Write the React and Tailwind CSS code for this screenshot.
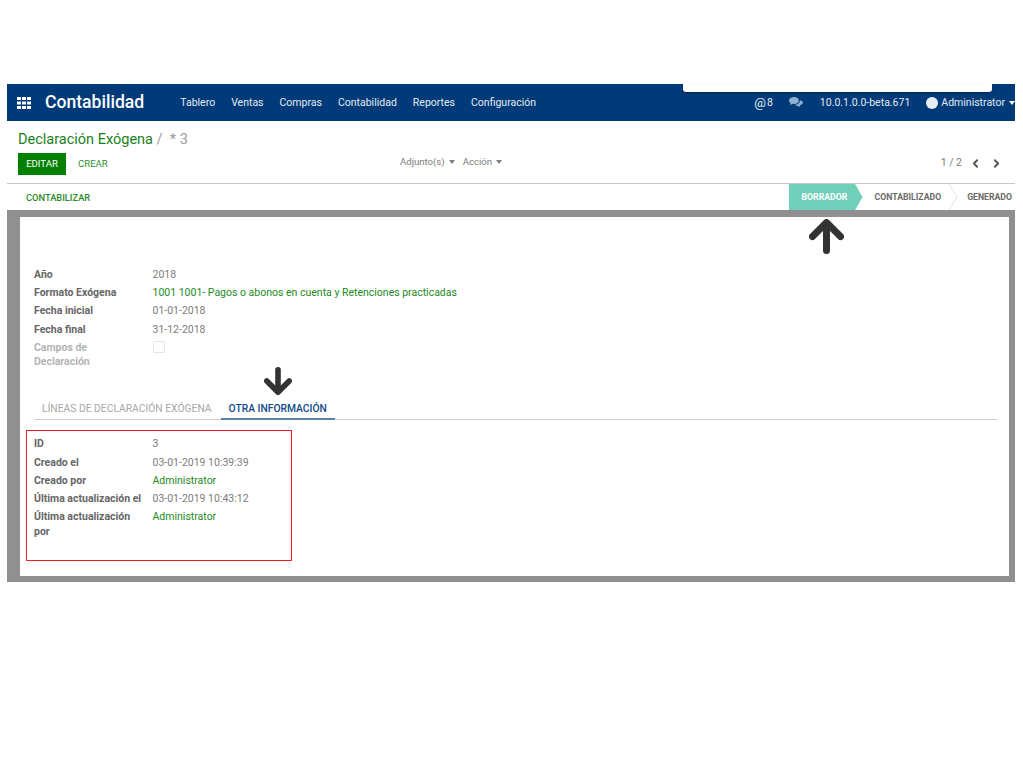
import { ChevronLeft, ChevronRight } from "lucide-react";

const Caret = () => (
  <span className="ml-1 inline-block w-0 h-0 align-middle border-x-[3.5px] border-x-transparent border-t-[4px] border-t-current" />
);

const Arrow = ({ down, size }) => (
  <svg
    width={size}
    height={size}
    viewBox="0 0 30 30"
    className={down ? "rotate-180" : ""}
    fill="none"
    stroke="#333333"
    strokeWidth="6"
    strokeLinecap="round"
    strokeLinejoin="round"
  >
    <path d="M15 27V4M3 15L15 3L27 15" />
  </svg>
);

const Field = ({ label, value, green, muted }) => (
  <div className="flex">
    <div className={`w-[118.5px] shrink-0 pr-[7px] font-bold leading-[14.5px] pb-[3.7px] ${muted ? "text-[#b4b4b4]" : "text-[#666666]"}`}>
      {label}
    </div>
    <div className={green ? "text-[#1d8a1d]" : "text-[#7c7c7c]"}>{value}</div>
  </div>
);

export default function App() {
  const menu = ["Tablero", "Ventas", "Compras", "Contabilidad", "Reportes", "Configuración"];

  return (
    <div className="h-[767px] pt-[84px] pl-[7px] pr-2 bg-white font-['Roboto',sans-serif] text-[10.5px]">
      {/* navbar */}
      <div className="relative h-[37px] bg-[#003a78] text-[#e4eaf1] flex items-center">
        <svg width="14" height="12" viewBox="0 0 14 12" fill="#ffffff" className="ml-[10px]">
          <path d="M0 0h4v3H0zM5 0h4v3H5zM10 0h4v3h-4zM0 4.5h4v3H0zM5 4.5h4v3H5zM10 4.5h4v3h-4zM0 9h4v3H0zM5 9h4v3H5zM10 9h4v3h-4z" />
        </svg>
        <span className="ml-[14px] text-[17.6px] font-medium text-white">Contabilidad</span>
        <div className="ml-9 flex gap-4">
          {menu.map((m) => (
            <span key={m}>{m}</span>
          ))}
        </div>
        <div className="ml-auto flex items-center">
          <span className="text-[13px] leading-none">@</span>
          <span className="ml-px">8</span>
          <svg width="14" height="11" viewBox="0 0 14 11" fill="#8fb0d0" className="ml-4">
            <path d="M5 0C2.2 0 0 1.5 0 3.5c0 1 .6 2 1.6 2.6L1 8l2.4-1.2c.5.1 1 .2 1.6.2 2.8 0 5-1.6 5-3.5S7.8 0 5 0z" />
            <path d="M11 3.2c.1 2.4-2.2 4.3-5 4.6.8.8 2 1.2 3.2 1.2l1.8 1.2-.3-1.8C12.8 7.8 14 6.8 14 5.6c0-1-1.2-2-3-2.4z" />
          </svg>
          <span className="ml-[17px]">10.0.1.0.0-beta.671</span>
          <span className="ml-4 w-[12px] h-[12px] rounded-full bg-[#e8edf2]" />
          <span className="ml-[3px]">Administrator</span>
          <span className="text-white"><Caret /></span>
        </div>
        <div className="absolute top-0 left-[676px] w-[309px] h-2 bg-white rounded-b-[3px] shadow-[0_1px_2px_rgba(0,0,0,0.4)]" />
      </div>

      {/* control panel */}
      <div className="h-[63px] border-b border-[#c8c8c8] pl-[11px] pr-[12px] text-[#7c7c7c]">
        <div className="pt-[10px] text-[14.5px] leading-[18px]">
          <span className="text-[#1b7f1b]">Declaración Exógena</span>
          <span className="text-[#9a9a9a]"> /&nbsp; * 3</span>
        </div>
        <div className="mt-[4px] flex items-center">
          <div className="w-[273px] flex items-center">
            <span className="w-[48px] h-[22px] bg-[#008000] text-white flex items-center justify-center text-[9.6px]">EDITAR</span>
            <span className="ml-[12px] text-[#2f8f2f] text-[9.6px]">CREAR</span>
          </div>
          <div className="ml-[109px] -mt-1 flex gap-2 text-[9.6px]">
            <span>Adjunto(s)<Caret /></span>
            <span>Acción<Caret /></span>
          </div>
          <div className="ml-auto -mt-0.5 flex items-center">
            <span>1 / 2</span>
            <ChevronLeft size={13} strokeWidth={3.5} className="ml-[7px] text-[#555555]" />
            <ChevronRight size={13} strokeWidth={3.5} className="ml-2 text-[#555555]" />
          </div>
        </div>
      </div>

      {/* status bar */}
      <div className="h-[26px] flex items-center font-medium text-[9.3px]">
        <span className="ml-[19px] pt-[2px] text-[#2a8a2a]">CONTABILIZAR</span>
        <div className="ml-auto h-full flex items-center text-[#6a6a6a] font-bold text-[8.7px]">
          <span className="w-[74px] h-full bg-[#6fcfb9] text-white flex items-center pl-[13px] pt-[2px] [clip-path:polygon(0_0,90%_0,100%_50%,90%_100%,0_100%)]">
            BORRADOR
          </span>
          <span className="ml-[12px] pt-[2px]">CONTABILIZADO</span>
          <svg width="9" height="26" viewBox="0 0 9 26" fill="none" stroke="#e2e2e2" className="ml-[8px]">
            <path d="M0 0L8 13L0 26" />
          </svg>
          <span className="ml-[9px] mr-[3px] pt-[2px]">GENERADO</span>
        </div>
      </div>

      {/* sheet with the grey frame */}
      <div className="h-[372px] border-[#909090] border-t-[7px] border-l-[13px] border-r-[6px] border-b-[6px]">
        <div className="h-[37px] pt-[2px] pl-[789px]">
          <Arrow size={35} />
        </div>
        <div className="mt-[14px] pl-[14px] pr-3 leading-[14.5px]">
          <Field label="Año" value="2018" />
          <Field green label="Formato Exógena" value="1001 1001- Pagos o abonos en cuenta y Retenciones practicadas" />
          <Field label="Fecha inicial" value="01-01-2018" />
          <Field label="Fecha final" value="31-12-2018" />
          <Field
            muted
            label={<span className="block w-[80px]">Campos de Declaración</span>}
            value={<span className="block w-3 h-3 border border-[#e4e4e4] rounded-[1px]" />}
          />

          <div className="ml-[230px] -mt-[6px] h-[28px]">
            <Arrow down size={28} />
          </div>
          <div className="flex border-b border-[#d0d0d0] text-[10.3px] mt-[5px] h-[20px]">
            <span className="px-2 text-[#a8a8a8] pt-[2px]">LÍNEAS DE DECLARACIÓN EXÓGENA</span>
            <span className="ml-px px-2 h-[20px] pt-[2px] font-medium text-[#0f4a86] border-b-2 border-[#5b82ab]">OTRA INFORMACIÓN</span>
          </div>

          <div className="mt-[10px] -ml-[8px] w-[266px] h-[131px] border border-[#ee1c25] pl-[7px] pt-[6px]">
            <Field label="ID" value="3" />
            <Field label="Creado el" value="03-01-2019 10:39:39" />
            <Field green label="Creado por" value="Administrator" />
            <Field label="Última actualización el" value="03-01-2019 10:43:12" />
            <Field green label="Última actualización por" value="Administrator" />
          </div>
        </div>
      </div>
    </div>
  );
}
